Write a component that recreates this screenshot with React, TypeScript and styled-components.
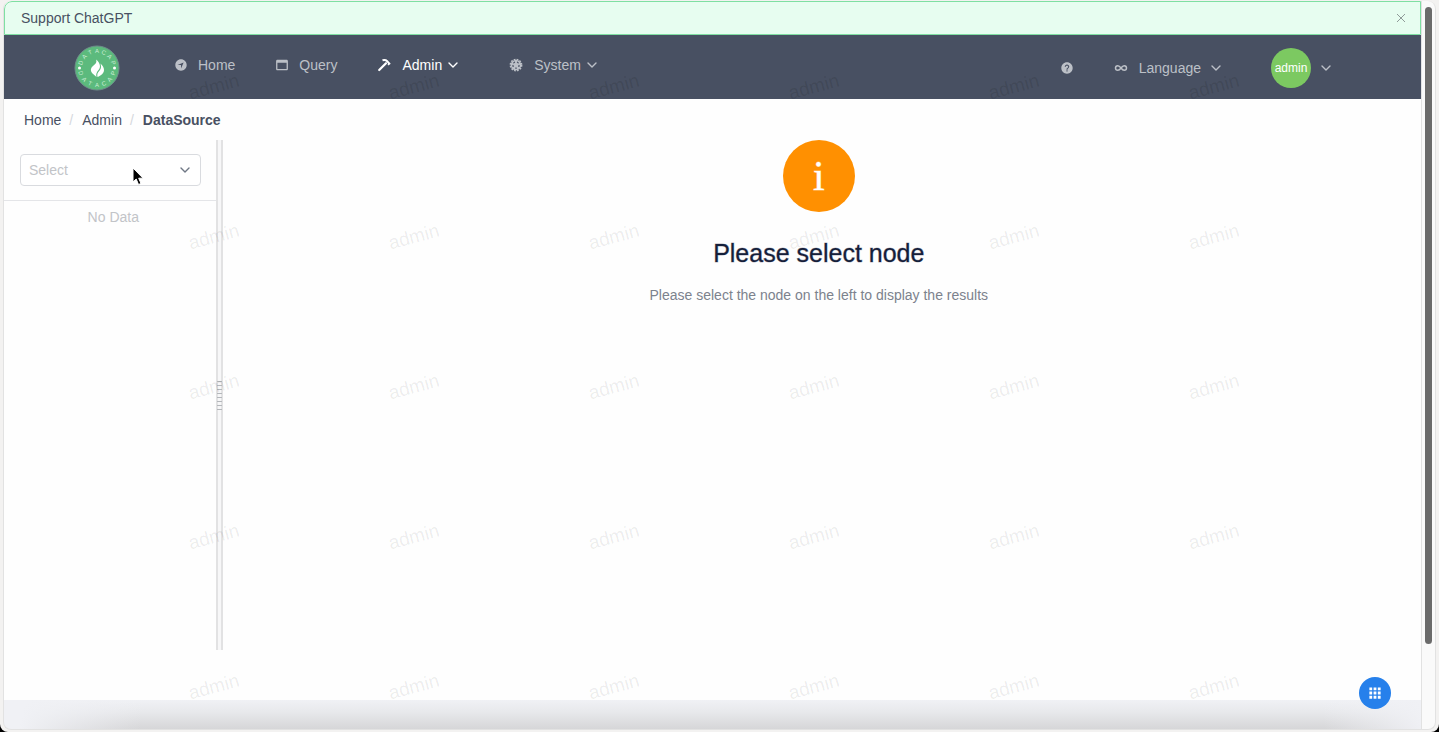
import React from 'react';
import styled, { createGlobalStyle } from 'styled-components';
import {
  IoIosNavigate, IoMdBrowsers, IoMdHelpCircle, IoMdApps,
} from 'react-icons/io';

const GlobalStyle = createGlobalStyle`
  * { box-sizing: border-box; }
  body {
    margin: 0;
    background: #000;
    color: #485062;
    font: 14px/20px "Liberation Sans", Arial, sans-serif;
  }
  button { font: inherit; border: 0; padding: 0; background: none; cursor: pointer; }
  a { color: inherit; text-decoration: none; }
  svg { flex: none; display: block; }
`;

const Frame = styled.div`
  min-height: 100vh;
  display: flex;
  padding: 1px 3px 2px;
  background: #f3f2f1;
  border-radius: 0 0 8px 8px;
`;

const Page = styled.div`
  position: relative;
  flex: 1;
  min-width: 0;
  display: flex;
  flex-direction: column;
  border: 1px solid #e2e2e2;
  border-width: 0 0 1px 1px;
  border-radius: 8px 0 0 8px;
  background: #fefefe;
  overflow: hidden;
`;

const ScrollTrack = styled.div`
  width: 15px;
  padding: 6px 3px 6px;
  background: #fafafa;
  border: 1px solid #e2e2e2;
  border-top: 0;
  border-radius: 0 8px 8px 0;
`;

const ScrollThumb = styled.div`
  height: 89%;
  width: 7px;
  border-radius: 4px;
  background: #6b6b6b;
`;

const Banner = styled.div`
  display: flex;
  align-items: center;
  justify-content: space-between;
  height: 34px;
  padding: 0 14px 0 16px;
  border: 1px solid #7fdfa2;
  border-radius: 8px 0 0 0;
  background: #e7fdf0;
  button { color: #8f9a98; }
`;

const Header = styled.header`
  display: flex;
  align-items: center;
  justify-content: space-between;
  height: 64px;
  padding: 2px 89px 0 70px;
  background: #485062;
  color: #bcc0c7;
`;

const HeaderGroup = styled.div`
  display: flex;
  align-items: center;
`;

const Nav = styled.nav`
  display: flex;
  align-items: center;
  gap: 40px;
  margin: 0 0 6px 54px;
`;

const NavItem = styled.a<{ $active?: boolean; $menu?: boolean }>`
  display: flex;
  align-items: center;
  margin-right: ${p => (p.$menu ? 10 : 0)}px;
  color: ${p => (p.$active ? '#fff' : 'inherit')};
  span { margin: ${p => (p.$menu ? '0 5px 0 11px' : '0 0 0 10px')}; }
`;

const HelpButton = styled.button`
  color: inherit;
  margin-right: 40px;
`;

const MenuButton = styled.button`
  display: flex;
  align-items: center;
  gap: 9px;
  color: inherit;
  & + & { margin-left: 49px; }
  span { margin-left: 2px; }
`;

const Avatar = styled.div`
  width: 40px;
  height: 40px;
  border-radius: 50%;
  background: #7cc961;
  color: #fff;
  font-size: 12px;
  line-height: 41px;
  text-align: center;
`;

const Breadcrumb = styled.nav`
  display: flex;
  gap: 8px;
  height: 41px;
  padding: 11px 20px 10px;
  i { padding-right: 1px; color: #d5d8dd; font-style: normal; }
`;

const Split = styled.main`
  flex: 1;
  display: flex;
  min-height: 300px;
  margin-bottom: 50px;
`;

const Sidebar = styled.aside`
  width: 15%;
  text-align: center;
  color: #c2c4c8;
`;

const SelectArea = styled.div`
  padding: 14px 16px;
  border-bottom: 1px solid #e4e5e8;
`;

const SelectBox = styled.label`
  display: grid;
  align-items: center;
  > * { grid-area: 1 / 1; }
  svg { justify-self: end; margin-right: 10px; color: #6f7785; pointer-events: none; }
`;

const Select = styled.select`
  appearance: none;
  width: 100%;
  height: 32px;
  padding: 0 8px;
  border: 1px solid #d9dbdf;
  border-radius: 4px;
  background: #fff;
  color: #c2c4c8;
  font: inherit;
`;

const Empty = styled.p`
  margin: 6px 0 0 6px;
`;

const Splitter = styled.div`
  display: flex;
  flex-direction: column;
  align-items: center;
  justify-content: center;
  gap: 3px;
  width: 7px;
  margin: 0 -6px 0 -1px;
  background: #f7f7f8;
  border: solid #e2e2e3;
  border-width: 0 2px 0 2px;
  z-index: 1;
  i { width: 5px; height: 1px; background: #b4b7bb; }
`;

const Result = styled.section`
  flex: 1;
  display: flex;
  flex-direction: column;
  align-items: center;
`;

const InfoIcon = styled.div`
  width: 72px;
  height: 72px;
  border-radius: 50%;
  background: #ff9001;
  color: #fff;
  font: 42px/72px "Liberation Serif", serif;
  text-align: center;
  -webkit-text-stroke: 1px rgba(255, 255, 255, 0.5);
`;

const Title = styled.h1`
  margin: 25px 0 16px;
  color: #15203a;
  font-size: 25px;
  font-weight: 400;
  line-height: 32px;
  -webkit-text-stroke: 1px rgba(21, 32, 58, 0.35);
`;

const Description = styled.p`
  margin: 0;
  color: #7c828d;
`;

const Footer = styled.footer`
  height: 29px;
  background: linear-gradient(100deg, #f0f1f5 20px, transparent 140px),
    linear-gradient(260deg, #f0f1f5 0, transparent 100px),
    linear-gradient(#f0f1f5, #e8e9ec 40%, #d6d6d8);
`;

const FloatingButton = styled.button`
  position: absolute;
  right: 30px;
  bottom: 20px;
  display: grid;
  place-items: center;
  width: 32px;
  height: 32px;
  border-radius: 50%;
  background: #2680eb;
  color: #fff;
  z-index: 2;
`;

const WatermarkLayer = styled.div`
  position: absolute;
  inset: 11px 0 0 110px;
  display: grid;
  grid-template-columns: repeat(6, 200px);
  grid-auto-rows: 150px;
  overflow: hidden;
  pointer-events: none;
  z-index: 1;
`;

const Mark = styled.span<{ $faint: boolean }>`
  place-self: center;
  color: rgba(0, 0, 0, ${p => (p.$faint ? 0.1 : 0.08)});
  font-size: 19px;
  transform: rotate(-15deg);
`;

const Pointer = styled.svg`
  position: absolute;
  left: 128px;
  top: 166px;
  z-index: 3;
`;

const Chevron = () => (
  <svg width="12" height="12" viewBox="0 0 12 12" fill="none" stroke="currentColor" strokeWidth="1.4" strokeLinecap="round" strokeLinejoin="round">
    <path d="M2 4l4 4 4-4" />
  </svg>
);

const CloseIcon = () => (
  <svg width="10" height="10" viewBox="0 0 10 10" fill="none" stroke="currentColor">
    <path d="M1 1l8 8M9 1L1 9" />
  </svg>
);

const HammerIcon = () => (
  <svg width="14" height="14" viewBox="0 0 14 14" fill="none" stroke="currentColor">
    <path d="M2.200 12L9 5.200" strokeWidth="2.200" strokeLinecap="round" />
    <path d="M5.500 2.300C7.500 1.700 9 2 10.200 3.200L12.400 5.800" strokeWidth="2" />
    <path d="M11 6.800l2.200-1.600" strokeWidth="1.600" />
  </svg>
);

const CogIcon = () => (
  <svg width="14" height="14" viewBox="0 0 14 14">
    <circle cx="7" cy="7" r="5.300" fill="currentColor" />
    <circle cx="7" cy="7" r="5.700" fill="none" stroke="currentColor" strokeWidth="1.400" strokeDasharray="1.790 1.190" />
    <g fill="#485062">
      {[36, 108, 180, 252, 324].map(angle => (
        <ellipse key={angle} cx="7" cy="3.900" rx="1.100" ry=".7" transform={`rotate(${angle} 7 7)`} />
      ))}
    </g>
  </svg>
);

const InfinityIcon = () => (
  <svg width="14" height="14" viewBox="0 0 14 14" fill="none" stroke="currentColor" strokeWidth="1.500">
    <path d="M7 7C5.800 5.300 4.900 4.700 3.800 4.700a2.300 2.300 0 0 0 0 4.600C4.900 9.300 5.800 8.700 7 7s2.100-2.300 3.200-2.300a2.300 2.300 0 0 1 0 4.600C9.100 9.300 8.200 8.700 7 7z" />
  </svg>
);

const Letters = ({ bottom }: { bottom?: boolean }) => (
  <>
    {'DATACAP'.split('').map((letter, i) => {
      const angle = (i - 3) * 24 * (bottom ? -1 : 1);
      return (
        <text key={i} x="23" y={bottom ? 42 : 8} textAnchor="middle" transform={`rotate(${angle} 23 23)`}>
          {letter}
        </text>
      );
    })}
  </>
);

const Logo = () => (
  <svg width="46" height="46" viewBox="0 0 46 46" aria-label="DataCap">
    <circle cx="23" cy="23" r="22" fill="#5cba7d" stroke="#6f8f8b" strokeWidth="1" />
    <g fill="#cdeed8" fontSize="6" fontFamily="Liberation Sans, sans-serif">
      <Letters />
      <Letters bottom />
    </g>
    <circle cx="5.500" cy="23" r="1.500" fill="#fff" />
    <circle cx="40.500" cy="23" r="1.500" fill="#fff" />
    <path d="M22 14.500c1.200 3-.5 4.500-2.500 6-3 2.300-3.500 5-1.500 7.500l4.500 4c-.8-3 .2-5 2-7 2.500-2.500 2-7-2.500-10.500z" fill="#fff" />
    <path d="M26.500 18.500c1 4 .5 5.500-1.300 7.500-2 2-2.200 3.500-1.700 6 3.500-1.500 6.500-3.500 6.500-7 0-2.500-1.500-4.500-3.500-6.500z" fill="#fff" />
  </svg>
);

export default function App() {
  return (
    <>
      <GlobalStyle />
      <Frame>
        <Page>
          <Banner>
            <span>Support ChatGPT</span>
            <button aria-label="Close"><CloseIcon /></button>
          </Banner>
          <Header>
            <HeaderGroup>
              <a href="#"><Logo /></a>
              <Nav>
                <NavItem href="#"><IoIosNavigate size={14} /><span>Home</span></NavItem>
                <NavItem href="#"><IoMdBrowsers size={14} /><span>Query</span></NavItem>
                <NavItem href="#" $active $menu><HammerIcon /><span>Admin</span><Chevron /></NavItem>
                <NavItem href="#" $menu><CogIcon /><span>System</span><Chevron /></NavItem>
              </Nav>
            </HeaderGroup>
            <HeaderGroup>
              <HelpButton aria-label="Help"><IoMdHelpCircle size={14} /></HelpButton>
              <MenuButton><InfinityIcon /><span>Language</span><Chevron /></MenuButton>
              <MenuButton><Avatar>admin</Avatar><Chevron /></MenuButton>
            </HeaderGroup>
          </Header>
          <Breadcrumb>
            <a href="#">Home</a><i>/</i><a href="#">Admin</a><i>/</i><b>DataSource</b>
          </Breadcrumb>
          <Split>
            <Sidebar>
              <SelectArea>
                <SelectBox>
                  <Select aria-label="Data source"><option>Select</option></Select>
                  <Chevron />
                </SelectBox>
              </SelectArea>
              <Empty>No Data</Empty>
            </Sidebar>
            <Splitter>
              {Array.from({ length: 8 }, (_, i) => <i key={i} />)}
            </Splitter>
            <Result>
              <InfoIcon>i</InfoIcon>
              <Title>Please select node</Title>
              <Description>Please select the node on the left to display the results</Description>
            </Result>
          </Split>
          <Footer />
          <WatermarkLayer aria-hidden="true">
            {Array.from({ length: 30 }, (_, i) => <Mark key={i} $faint={i < 6}>admin</Mark>)}
          </WatermarkLayer>
          <FloatingButton aria-label="Apps"><IoMdApps size={18} /></FloatingButton>
          <Pointer width="12" height="19" viewBox="0 0 12 19">
            <path d="M1 1v14l3.200-3 2.300 5.500 2.500-1-2.300-5.300H11z" fill="#000" stroke="#fff" />
          </Pointer>
        </Page>
        <ScrollTrack><ScrollThumb /></ScrollTrack>
      </Frame>
    </>
  );
}
